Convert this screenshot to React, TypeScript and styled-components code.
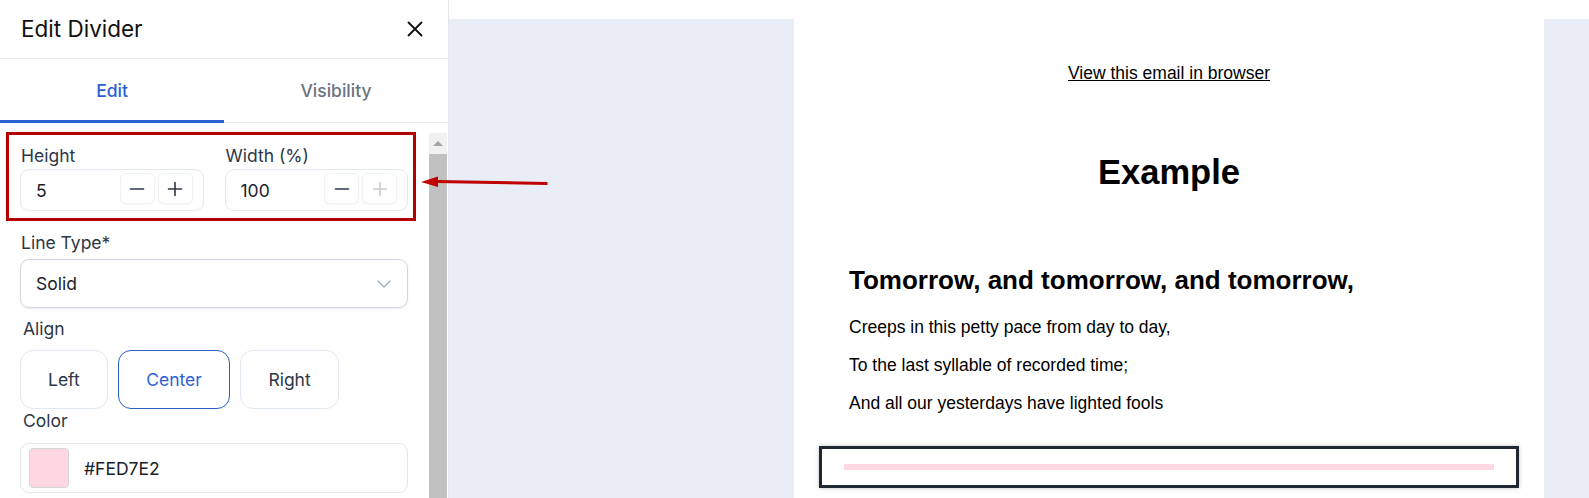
import React from "react";
import styled, { createGlobalStyle, css } from "styled-components";

const Global = createGlobalStyle`
  html, body { margin: 0; padding: 0; background: #ffffff; }
  body { font-family: Inter, "Noto Sans", sans-serif; color: #1a202c; }
  * { box-sizing: border-box; }
`;

const Page = styled.div`
  position: relative;
  display: flex;
  width: 1589px;
  height: 498px;
  overflow: hidden;
`;

const Sidebar = styled.aside`
  width: 449px;
  flex: none;
  display: flex;
  flex-direction: column;
  background: #fff;
  border-right: 1px solid #e5e7eb;
`;

const Header = styled.div`
  height: 59px;
  flex: none;
  display: flex;
  align-items: center;
  justify-content: space-between;
  padding: 0 25px 1px 21px;
  border-bottom: 1px solid #e8eaee;
`;

const Title = styled.h2`
  margin: 0;
  font-size: 22.5px;
  font-weight: 400;
  color: #111;
`;

const CloseButton = styled.button`
  border: 0;
  background: none;
  padding: 0;
  display: flex;
  color: #111;
  cursor: pointer;
`;

const Tabs = styled.div`
  height: 64px;
  flex: none;
  display: flex;
  border-bottom: 1px solid #e8eaee;
`;

const Tab = styled.div<{ $active?: boolean }>`
  width: 224px;
  display: flex;
  align-items: center;
  justify-content: center;
  padding-top: 2px;
  font-size: 17.5px;
  font-weight: 500;
  color: ${(p) => (p.$active ? "#2c5fd4" : "#6b7280")};
  border-bottom: 3px solid ${(p) => (p.$active ? "#2c5fd4" : "transparent")};
  margin-bottom: -1px;
`;

const Body = styled.div`
  flex: 1;
  display: flex;
  min-height: 0;
`;

const Content = styled.div`
  flex: 1;
  padding: 22px 21px 0 20px;
  display: flex;
  flex-direction: column;
`;

const Scrollbar = styled.div`
  width: 18px;
  flex: none;
  margin: 10px 1px 0 0;
  background: #f1f1f1;
  display: flex;
  flex-direction: column;
`;

const ScrollArrow = styled.div`
  height: 21px;
  display: flex;
  align-items: center;
  justify-content: center;
  &::before {
    content: "";
    border-left: 5px solid transparent;
    border-right: 5px solid transparent;
    border-bottom: 5px solid #a3a3a3;
  }
`;

const ScrollThumb = styled.div`
  flex: 1;
  background: #c1c1c1;
`;

const Row = styled.div`
  display: grid;
  grid-template-columns: 1fr 1fr;
  gap: 21px;
`;

const Field = styled.div`
  display: flex;
  flex-direction: column;
`;

const Label = styled.label<{ $inset?: boolean }>`
  font-size: 17.5px;
  line-height: 21px;
  color: #2d3748;
  padding-left: ${(p) => (p.$inset ? "3px" : "1px")};
  margin-bottom: ${(p) => (p.$inset ? "0" : "3px")};
`;

const NumberBox = styled.div`
  height: 42px;
  display: flex;
  align-items: center;
  padding: 0 10px 0 15px;
  border: 1px solid #e2e8f0;
  border-radius: 9px;
  font-size: 17.5px;
  color: #1a202c;
`;

const NumberValue = styled.span`
  flex: 1;
`;

const Steppers = styled.div`
  display: flex;
  gap: 3px;
  margin-top: -3px;
`;

const StepButton = styled.button<{ $disabled?: boolean }>`
  width: 35px;
  height: 31px;
  padding: 0;
  display: flex;
  align-items: center;
  justify-content: center;
  border: 1px solid #f0f2f5;
  border-radius: 6px;
  background: #fff;
  box-shadow: 0 1px 2px rgba(0, 0, 0, 0.04);
  color: ${(p) => (p.$disabled ? "#c7cbd1" : "#2d3748")};
`;

const Select = styled.div`
  margin-top: 3px;
  height: 49px;
  display: flex;
  align-items: center;
  justify-content: space-between;
  padding: 0 16px 0 15px;
  border: 1px solid #cfd6df;
  border-radius: 9px;
  box-shadow: 0 1px 2px rgba(0, 0, 0, 0.08);
  font-size: 17.5px;
  color: #1a202c;
`;

const Section = styled.div<{ $top: number }>`
  margin-top: ${(p) => p.$top}px;
  display: flex;
  flex-direction: column;
`;

const AlignRow = styled.div`
  display: flex;
  gap: 10.5px;
  margin-top: 11px;
`;

const AlignButton = styled.button<{ $active?: boolean }>`
  height: 59px;
  padding: 0 27px;
  border-radius: 13px;
  background: #fff;
  font-family: inherit;
  font-size: 17.5px;
  border: 1px solid #e2e8f0;
  color: #2d3748;
  ${(p) =>
    p.$active &&
    css`
      border-color: #2c5fc4;
      color: #2c5fd4;
    `}
`;

const ColorBox = styled.div`
  margin-top: 12px;
  height: 50px;
  display: flex;
  align-items: center;
  gap: 15px;
  padding: 0 8px;
  border: 1px solid #e2e8f0;
  border-radius: 9px;
  font-size: 17.5px;
  color: #1a202c;
`;

const Swatch = styled.span<{ $color: string }>`
  width: 40px;
  height: 40px;
  border-radius: 4px;
  border: 1px solid #d6d6d6;
  background: ${(p) => p.$color};
`;

/* Canvas */
const Canvas = styled.main`
  flex: 1;
  display: flex;
  flex-direction: column;
`;

const TopStrip = styled.div`
  height: 19px;
  flex: none;
  background: #fff;
`;

const Stage = styled.div`
  flex: 1;
  background: #e9eef6;
  display: flex;
  padding-left: 345px;
`;

const EmailCard = styled.div`
  width: 750px;
  background: #fff;
  margin-top: -19px;
  padding-top: 19px;
  display: flex;
  flex-direction: column;
  font-family: "Liberation Sans", Arial, sans-serif;
  color: #000;
`;

const BrowserLink = styled.a`
  margin-top: 44px;
  text-align: center;
  font-size: 17.5px;
  line-height: 21px;
  color: #000;
  text-decoration: underline;
`;

const Heading = styled.h1`
  margin: 68px 0 0;
  text-align: center;
  font-size: 34.5px;
  line-height: 40px;
  font-weight: 700;
`;

const SubHeading = styled.h2`
  margin: 73px 0 0;
  padding-left: 55px;
  font-size: 26px;
  line-height: 30px;
  font-weight: 700;
`;

const Para = styled.p<{ $top: number }>`
  margin: ${(p) => p.$top}px 0 0;
  padding-left: 55px;
  font-size: 17.5px;
  line-height: 21px;
`;

const DividerBlock = styled.div`
  margin: 32px 25px 0;
  padding: 15px 22px;
  border: 3px solid #1f2733;
  box-shadow: 0 0 4px rgba(0, 0, 0, 0.25);
`;

const DividerLine = styled.div<{ $color: string; $h: number }>`
  height: ${(p) => p.$h}px;
  background: ${(p) => p.$color};
`;

/* Annotation overlay */
const Highlight = styled.div`
  position: absolute;
  left: 6px;
  top: 132px;
  width: 410px;
  height: 89px;
  border: 3px solid #b30000;
  pointer-events: none;
`;

const Arrow = styled.svg`
  position: absolute;
  left: 415px;
  top: 170px;
  pointer-events: none;
`;

const Minus = () => (
  <svg width="16" height="16" viewBox="0 0 16 16" fill="none" stroke="currentColor" strokeWidth="1.6" strokeLinecap="round">
    <path d="M1.5 8h13" />
  </svg>
);

const Plus = () => (
  <svg width="16" height="16" viewBox="0 0 16 16" fill="none" stroke="currentColor" strokeWidth="1.6" strokeLinecap="round">
    <path d="M1.5 8h13M8 1.5v13" />
  </svg>
);

const Stepper: React.FC<{ value: string; plusDisabled?: boolean }> = ({ value, plusDisabled }) => (
  <NumberBox>
    <NumberValue>{value}</NumberValue>
    <Steppers>
      <StepButton>
        <Minus />
      </StepButton>
      <StepButton $disabled={plusDisabled}>
        <Plus />
      </StepButton>
    </Steppers>
  </NumberBox>
);

export default function App() {
  return (
    <Page>
      <Global />
      <Sidebar>
        <Header>
          <Title>Edit Divider</Title>
          <CloseButton aria-label="Close">
            <svg width="16" height="16" viewBox="0 0 16 16" fill="none" stroke="currentColor" strokeWidth="1.8" strokeLinecap="round">
              <path d="M1.5 1.5l13 13M14.5 1.5l-13 13" />
            </svg>
          </CloseButton>
        </Header>
        <Tabs>
          <Tab $active>Edit</Tab>
          <Tab>Visibility</Tab>
        </Tabs>
        <Body>
          <Content>
            <Row>
              <Field>
                <Label>Height</Label>
                <Stepper value="5" />
              </Field>
              <Field>
                <Label>Width (%)</Label>
                <Stepper value="100" plusDisabled />
              </Field>
            </Row>
            <Section $top={21}>
              <Label>Line Type*</Label>
              <Select>
                <span>Solid</span>
                <svg width="14" height="8" viewBox="0 0 14 8" fill="none" stroke="#a0aec0" strokeWidth="1.3" strokeLinecap="round" strokeLinejoin="round">
                  <path d="M1 1l6 6 6-6" />
                </svg>
              </Select>
            </Section>
            <Section $top={10}>
              <Label $inset>Align</Label>
              <AlignRow>
                <AlignButton>Left</AlignButton>
                <AlignButton $active>Center</AlignButton>
                <AlignButton>Right</AlignButton>
              </AlignRow>
            </Section>
            <Section $top={1}>
              <Label $inset>Color</Label>
              <ColorBox>
                <Swatch $color="#FED7E2" />
                <span>#FED7E2</span>
              </ColorBox>
            </Section>
          </Content>
          <Scrollbar>
            <ScrollArrow />
            <ScrollThumb />
          </Scrollbar>
        </Body>
      </Sidebar>
      <Canvas>
        <TopStrip />
        <Stage>
          <EmailCard>
            <BrowserLink href="#">View this email in browser</BrowserLink>
            <Heading>Example</Heading>
            <SubHeading>Tomorrow, and tomorrow, and tomorrow,</SubHeading>
            <Para $top={22}>Creeps in this petty pace from day to day,</Para>
            <Para $top={17}>To the last syllable of recorded time;</Para>
            <Para $top={17}>And all our yesterdays have lighted fools</Para>
            <DividerBlock>
              <DividerLine $color="#FED7E2" $h={6} />
            </DividerBlock>
          </EmailCard>
        </Stage>
      </Canvas>
      <Highlight />
      <Arrow width="140" height="24" viewBox="0 0 140 24">
        <path d="M22 11.5 L131 13.5" stroke="#c00000" strokeWidth="3" strokeLinecap="square" />
        <path d="M6 12 L23 6.5 L23 17 Z" fill="#c00000" />
      </Arrow>
    </Page>
  );
}
